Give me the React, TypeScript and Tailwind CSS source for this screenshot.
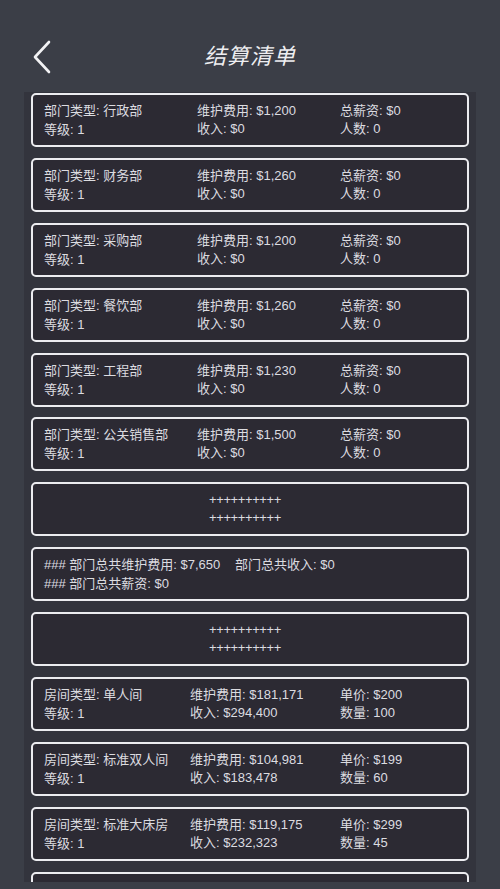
import React from "react";

const font = { fontFamily: '"Liberation Sans", "Noto Sans CJK SC", sans-serif' };

type Dept = { name: string; cost: string };
type Room = { name: string; cost: string; income: string; price: string; count: string };

const depts: Dept[] = [
  { name: "行政部", cost: "$1,200" },
  { name: "财务部", cost: "$1,260" },
  { name: "采购部", cost: "$1,200" },
  { name: "餐饮部", cost: "$1,260" },
  { name: "工程部", cost: "$1,230" },
  { name: "公关销售部", cost: "$1,500" },
];

const rooms: Room[] = [
  { name: "单人间", cost: "$181,171", income: "$294,400", price: "$200", count: "100" },
  { name: "标准双人间", cost: "$104,981", income: "$183,478", price: "$199", count: "60" },
  { name: "标准大床房", cost: "$119,175", income: "$232,323", price: "$299", count: "45" },
  { name: "豪华间", cost: "$98,000", income: "$150,000", price: "$399", count: "30" },
];

const Card = ({ children, center }: { children: React.ReactNode; center?: boolean }) => (
  <div
    className={`h-[54px] shrink-0 rounded-[5px] border-2 border-[#ececf0] bg-[#2c2a33] px-[11px] py-[7px] text-[13px] leading-[18px] text-[#dcdce0] ${
      center ? "flex flex-col items-center pr-[21px]" : ""
    }`}
  >
    {children}
  </div>
);

const Plus = () => (
  <Card center>
    <div className="tracking-[-0.4px]">++++++++++</div>
    <div className="tracking-[-0.4px]">++++++++++</div>
  </Card>
);

export default function App() {
  return (
    <div className="h-[889px] w-[500px] overflow-hidden bg-[#3b3e47]" style={font}>
      <div className="relative flex h-[92px] items-center justify-center">
        <svg
          className="absolute left-[32px] top-[40px]"
          width="20"
          height="34"
          viewBox="0 0 20 34"
          fill="none"
          stroke="#f2f2f4"
          strokeWidth="2.6"
          strokeLinecap="round"
          strokeLinejoin="round"
        >
          <path d="M17 2 L3 17 L17 32" />
        </svg>
        <h1 className="mt-[20px] text-[22px] italic tracking-[1px] text-[#eeeef1]">结算清单</h1>
      </div>
      <div className="mx-[24px] flex h-[790px] flex-col gap-[10.9px] overflow-hidden bg-[#33343d] px-[7px] pt-px">
        {depts.map((d) => (
          <Card key={d.name}>
            <div className="flex">
              <div className="w-[153px]">部门类型: {d.name}</div>
              <div className="w-[143px]">维护费用: {d.cost}</div>
              <div>总薪资: $0</div>
            </div>
            <div className="flex">
              <div className="w-[153px] pt-px">等级: 1</div>
              <div className="w-[143px]">收入: $0</div>
              <div>人数: 0</div>
            </div>
          </Card>
        ))}
        <Plus />
        <Card>
          <div className="flex">
            <div className="w-[191px]">### 部门总共维护费用: $7,650</div>
            <div>部门总共收入: $0</div>
          </div>
          <div className="pt-px">### 部门总共薪资: $0</div>
        </Card>
        <Plus />
        {rooms.map((r) => (
          <Card key={r.name}>
            <div className="flex">
              <div className="w-[146px]">房间类型: {r.name}</div>
              <div className="w-[150px]">维护费用: {r.cost}</div>
              <div>单价: {r.price}</div>
            </div>
            <div className="flex">
              <div className="w-[146px] pt-px">等级: 1</div>
              <div className="w-[150px]">收入: {r.income}</div>
              <div>数量: {r.count}</div>
            </div>
          </Card>
        ))}
      </div>
    </div>
  );
}
